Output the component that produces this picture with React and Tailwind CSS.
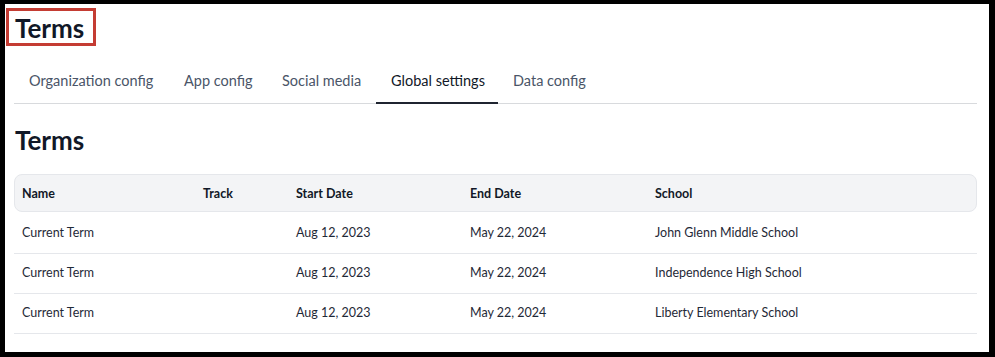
export default function App() {
  const rows = [
    ["Current Term", "", "Aug 12, 2023", "May 22, 2024", "John Glenn Middle School"],
    ["Current Term", "", "Aug 12, 2023", "May 22, 2024", "Independence High School"],
    ["Current Term", "", "Aug 12, 2023", "May 22, 2024", "Liberty Elementary School"],
  ];
  const tabs = [
    ["Organization config", "w-[155px]"],
    ["App config", "w-[98px]"],
    ["Social media", "w-[109px]"],
    ["Global settings", "w-[122px]"],
    ["Data config", "w-[104px]"],
  ];
  const cols = "grid grid-cols-[181px_93px_174px_185px_1fr]";
  return (
    <div className="w-[995px] h-[357px] bg-black pt-[4px] pl-[5px] pr-[6px] pb-[5px]" style={{ fontFamily: "Lato, 'Noto Sans', sans-serif" }}>
      <div className="relative w-full h-full bg-white pl-[9px] pr-[12px] overflow-hidden">
        <div className="absolute left-[1px] top-[4px] w-[90px] h-[38px] border-[3px] border-[#c43c33]" />
        <h1 className="pt-[8px] pl-[1px] text-[26px] leading-[32px] font-bold text-[#111827]">Terms</h1>
        <div className="mt-[17px] flex border-b border-[#d8dadd]">
          {tabs.map(([t, w]) => (
            <div
              key={t}
              className={
                w + " px-[15px] pt-[10px] pb-[11px] leading-[20px] text-[14.5px] -mb-px border-b-2 whitespace-nowrap " +
                (t === "Global settings" ? "border-[#1f2430] text-[#111827]" : "border-transparent text-[#4a5568]")
              }
            >
              {t}
            </div>
          ))}
        </div>
        <h2 className="mt-[20px] pl-[1px] text-[26px] leading-[32px] font-bold text-[#111827]">Terms</h2>
        <div className="mt-[18px] text-[12.5px]">
          <div className={cols + " h-[38px] pt-[3px] items-center bg-[#f3f4f6] border border-[#e5e7eb] rounded-[8px] font-bold text-[#111827]"}>
            <div className="pl-[7px]">Name</div>
            <div className="pl-[7px]">Track</div>
            <div className="pl-[7px]">Start Date</div>
            <div className="pl-[7px]">End Date</div>
            <div className="pl-[7px]">School</div>
          </div>
          <div className="mt-[2px]">
            {rows.map((r, i) => (
              <div key={i} className={cols + " h-[40px] items-center border-b border-[#e5e7eb] text-[#1f2937]"}>
                {r.map((c, j) => (
                  <div key={j} className="pl-[8px]">{c}</div>
                ))}
              </div>
            ))}
          </div>
        </div>
      </div>
    </div>
  );
}
